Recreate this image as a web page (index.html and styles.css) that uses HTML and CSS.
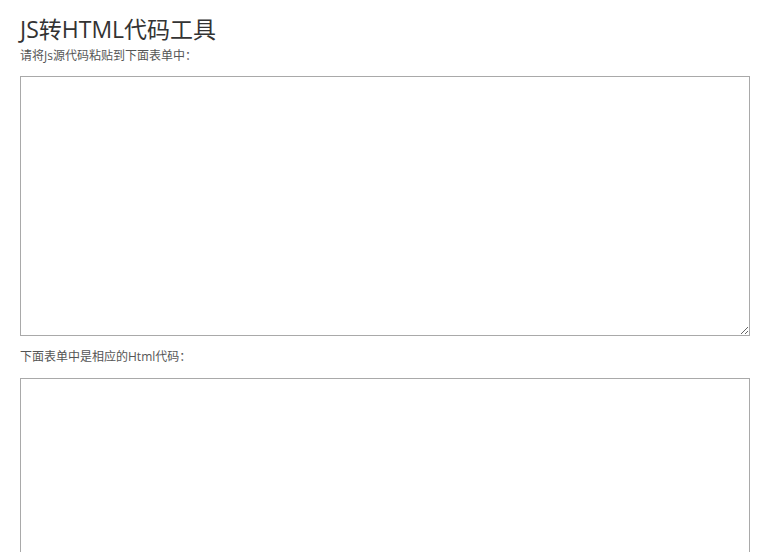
FILE: index.html
```
<!DOCTYPE html>
<html lang="zh-CN">
<head>
<meta charset="utf-8">
<title>JS转HTML代码工具</title>
<link rel="stylesheet" href="styles.css">
</head>
<body>
<div class="page">
  <h1 class="title">JS转HTML代码工具</h1>
  <p class="label">请将Js源代码粘贴到下面表单中：</p>
  <textarea class="box box-src"></textarea>
  <p class="label label-out">下面表单中是相应的Html代码：</p>
  <textarea class="box box-out"></textarea>
</div>
</body>
</html>
```
FILE: styles.css
```
html, body {
  margin: 0;
  padding: 0;
  background: #fff;
}
.page {
  padding: 14px 20px 0 20px;
  font-family: "Open Sans", "Noto Sans CJK SC", sans-serif;
  color: #333;
}
.title {
  margin: 0;
  font-size: 23px;
  font-weight: normal;
  line-height: 30px;
  color: #333;
}
.label {
  margin: 2px 0 10px 0;
  font-size: 12px;
  line-height: 20px;
  color: #555;
}
.label-out {
  margin-top: 11px;
  margin-bottom: 11px;
}
.box {
  display: block;
  box-sizing: border-box;
  width: 730px;
  height: 260px;
  margin: 0;
  border: 1px solid #a9a9a9;
  padding: 2px;
  background: #fff;
}
```
